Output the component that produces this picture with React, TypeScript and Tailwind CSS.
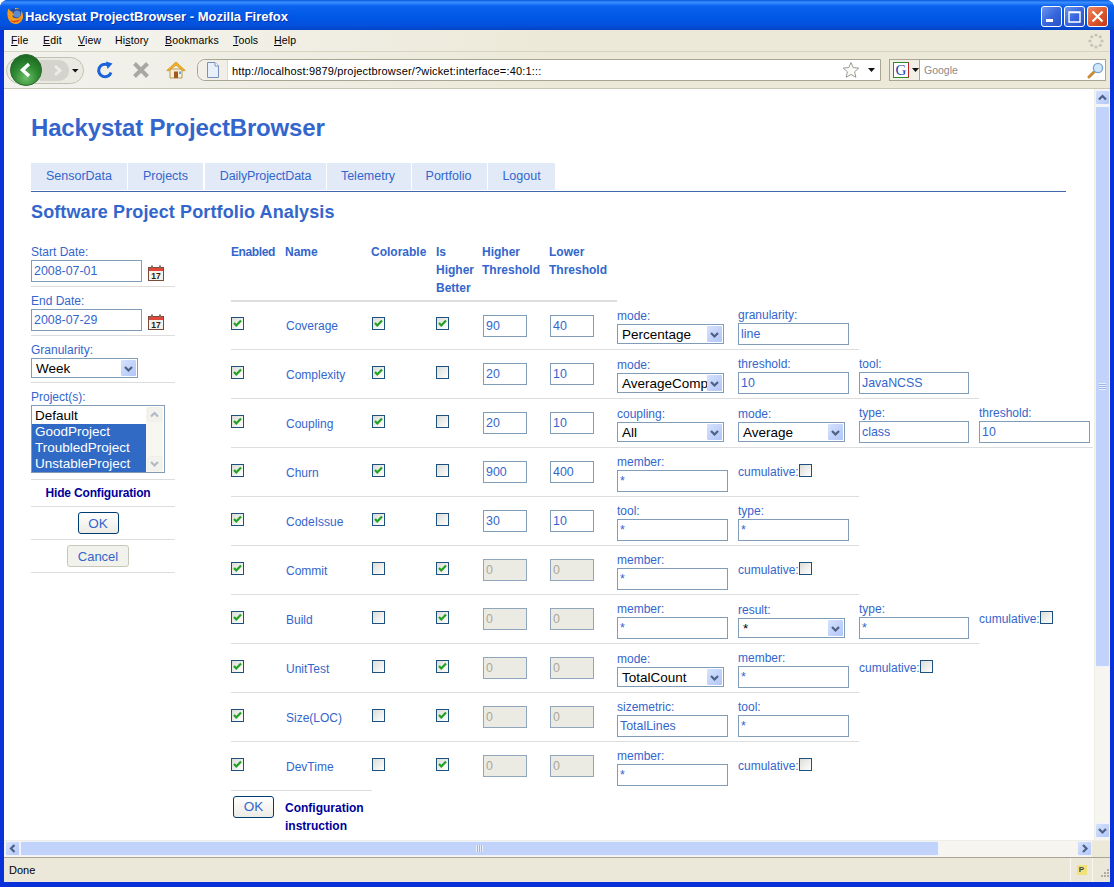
import React from "react";

const SANS = "font-['Liberation_Sans',Arial,sans-serif]";

function Chevron({ dir = "down" }: { dir?: "up" | "down" | "left" | "right" }) {
  const d = { down: "M2 4 L5.5 7.5 L9 4", up: "M2 7.5 L5.5 4 L9 7.5", left: "M7.5 2 L4 5.5 L7.5 9", right: "M4 2 L7.5 5.5 L4 9" }[dir];
  return (
    <svg width="11" height="11" viewBox="0 0 11 11" fill="none">
      <path d={d} stroke="#4d6185" strokeWidth="2.2" />
    </svg>
  );
}

function ScrollBtn({ dir }: { dir: "up" | "down" | "left" | "right" }) {
  return (
    <div className="flex h-[15px] w-[15px] shrink-0 items-center justify-center rounded-[2px] border border-[#eef3ff] bg-linear-to-br from-[#d6e2fd] to-[#b3c7f8]">
      <Chevron dir={dir} />
    </div>
  );
}

function Check({ on }: { on: boolean }) {
  return (
    <span className="flex h-[13px] w-[13px] shrink-0 items-center justify-center border border-[#1c5180] bg-linear-to-br from-[#dcdcd7] to-white">
      {on && (
        <svg width="11" height="11" viewBox="0 0 11 11" fill="none">
          <path d="M2 5 L4.3 7.5 L9 2.5" stroke="#21a121" strokeWidth="2.2" />
        </svg>
      )}
    </span>
  );
}

function Field({ value, w = "w-[111px]" }: { value: string; w?: string }) {
  return (
    <input
      readOnly
      value={value}
      className={`${w} block h-[22px] border border-[#7f9db9] bg-white pl-[2px] text-[12.4px] text-[#3366cc] outline-none`}
    />
  );
}

function Select({ value }: { value: string }) {
  return (
    <div className="flex h-[20px] w-[107px] items-center border border-[#7f9db9] bg-white pr-px">
      <span className="flex-1 overflow-hidden whitespace-nowrap pl-[4px] pt-px text-[13.5px] leading-[17px] text-black">{value}</span>
      <span className="flex h-[16px] w-[15px] shrink-0 items-center justify-center rounded-[1px] bg-linear-to-br from-[#d6e2fd] to-[#b1c5f7]">
        <Chevron />
      </span>
    </div>
  );
}

function Calendar() {
  return (
    <svg width="17" height="16" viewBox="0 0 17 16" className="ml-[6px] mt-[5px] shrink-0">
      <rect x="0.5" y="2.5" width="15" height="13" fill="#f6f1e8" stroke="#7a4a3a" />
      <rect x="1" y="3" width="14" height="3" fill="#e2463a" />
      <rect x="3" y="0.5" width="2" height="3" fill="#8a6a5a" />
      <rect x="11" y="0.5" width="2" height="3" fill="#8a6a5a" />
      <text x="8" y="14" textAnchor="middle" fontSize="8.5" fontWeight="700" fontFamily="Liberation Sans" fill="#222">17</text>
    </svg>
  );
}

type Cfg =
  | { k: "input"; label: string; value: string; w?: string; cell?: string; noLine?: boolean }
  | { k: "select"; label: string; value: string; cell?: string; noLine?: boolean }
  | { k: "check"; label: string; cell?: string; noLine?: boolean };

type Row = { name: string; col: boolean; hb: boolean; hi: string; lo: string; off?: boolean; cfg: Cfg[] };

const ROWS: Row[] = [
  { name: "Coverage", col: true, hb: true, hi: "90", lo: "40", cfg: [
    { k: "select", label: "mode:", value: "Percentage" },
    { k: "input", label: "granularity:", value: "line" },
  ] },
  { name: "Complexity", col: true, hb: false, hi: "20", lo: "10", cfg: [
    { k: "select", label: "mode:", value: "AverageComplexity" },
    { k: "input", label: "threshold:", value: "10" },
    { k: "input", label: "tool:", value: "JavaNCSS", w: "w-[110px]" },
  ] },
  { name: "Coupling", col: true, hb: false, hi: "20", lo: "10", cfg: [
    { k: "select", label: "coupling:", value: "All" },
    { k: "select", label: "mode:", value: "Average" },
    { k: "input", label: "type:", value: "class", w: "w-[110px]" },
    { k: "input", label: "threshold:", value: "10", cell: "w-[114px]" },
  ] },
  { name: "Churn", col: true, hb: false, hi: "900", lo: "400", cfg: [
    { k: "input", label: "member:", value: "*" },
    { k: "check", label: "cumulative:" },
  ] },
  { name: "CodeIssue", col: true, hb: false, hi: "30", lo: "10", cfg: [
    { k: "input", label: "tool:", value: "*" },
    { k: "input", label: "type:", value: "*" },
  ] },
  { name: "Commit", col: false, hb: true, hi: "0", lo: "0", off: true, cfg: [
    { k: "input", label: "member:", value: "*" },
    { k: "check", label: "cumulative:" },
  ] },
  { name: "Build", col: false, hb: true, hi: "0", lo: "0", off: true, cfg: [
    { k: "input", label: "member:", value: "*" },
    { k: "select", label: "result:", value: "*" },
    { k: "input", label: "type:", value: "*", w: "w-[110px]" },
    { k: "check", label: "cumulative:", noLine: true, cell: "w-[100px]" },
  ] },
  { name: "UnitTest", col: false, hb: true, hi: "0", lo: "0", off: true, cfg: [
    { k: "select", label: "mode:", value: "TotalCount" },
    { k: "input", label: "member:", value: "*" },
    { k: "check", label: "cumulative:", noLine: true, cell: "w-[100px]" },
  ] },
  { name: "Size(LOC)", col: false, hb: true, hi: "0", lo: "0", off: true, cfg: [
    { k: "input", label: "sizemetric:", value: "TotalLines" },
    { k: "input", label: "tool:", value: "*" },
  ] },
  { name: "DevTime", col: false, hb: true, hi: "0", lo: "0", off: true, cfg: [
    { k: "input", label: "member:", value: "*" },
    { k: "check", label: "cumulative:" },
  ] },
];

function Threshold({ value, off }: { value: string; off?: boolean }) {
  return (
    <input
      readOnly
      value={value}
      className={`block h-[22px] w-[44px] border pl-[2px] text-[12.4px] outline-none ${off ? "border-[#8fa6bd] bg-[#ebebe4] text-[#aca899]" : "border-[#7f9db9] bg-white text-[#3366cc]"}`}
    />
  );
}

function ConfigCell({ c, idx, first, last }: { c: Cfg; idx: number; first: boolean; last: boolean }) {
  const width = c.cell ?? (idx === 2 ? "w-[120px]" : "w-[121px]");
  const line = !last && !c.noLine ? "border-b border-[#dddddd]" : "";
  const shift = first ? "-mt-px" : "";
  return (
    <div className={`${width} shrink-0 ${line} text-[12px] text-[#3366cc]`}>
      {c.k === "check" ? (
        <div className={`flex items-start pt-[15px] ${shift}`}>
          <span className="leading-[18px]">{c.label}</span>
          <span className="mt-px"><Check on={false} /></span>
        </div>
      ) : c.k === "select" ? (
        <div className={`pt-[6px] ${shift}`}>
          <div className="pt-px leading-[16px]">{c.label}</div>
          <Select value={c.value} />
        </div>
      ) : (
        <div className={`pt-[5px] ${shift}`}>
          <div className="pt-px leading-[16px]">{c.label}</div>
          <Field value={c.value} w={c.w} />
        </div>
      )}
    </div>
  );
}

function TableRow({ r, first, last }: { r: Row; first: boolean; last: boolean }) {
  const line = last ? "" : "border-b border-[#dddddd]";
  const top = first ? "pt-[15px]" : "pt-[16px]";
  const nameTop = first ? "pt-[15px]" : "pt-[16px]";
  return (
    <div className={`flex ${first || last ? "h-[48px]" : "h-[49px]"}`}>
      <div className={`w-[54px] shrink-0 ${line} ${top}`}><Check on /></div>
      <div className={`w-[87px] shrink-0 ${line} ${nameTop} pl-px text-[12px] leading-[18px] text-[#3366cc]`}>{r.name}</div>
      <div className={`w-[64px] shrink-0 ${line} ${top}`}><Check on={r.col} /></div>
      <div className={`w-[47px] shrink-0 ${line} ${top}`}><Check on={r.hb} /></div>
      <div className={`w-[67px] shrink-0 ${line} pt-[13px]`}><Threshold value={r.hi} off={r.off} /></div>
      <div className={`w-[67px] shrink-0 ${line} pt-[13px]`}><Threshold value={r.lo} off={r.off} /></div>
      {r.cfg.map((c, i) => (
        <ConfigCell key={i} c={c} idx={i} first={first} last={last} />
      ))}
    </div>
  );
}

function Sidebar() {
  const group = "border-b border-[#dddddd]";
  const label = "pt-px text-[12px] leading-[16px] text-[#3366cc]";
  return (
    <div className="w-[144px] shrink-0">
      <div className={`${group} pb-[4px]`}>
        <div className={label}>Start Date:</div>
        <div className="flex"><Field value="2008-07-01" /><Calendar /></div>
      </div>
      <div className={`${group} pb-[4px] pt-[5px]`}>
        <div className={label}>End Date:</div>
        <div className="flex"><Field value="2008-07-29" /><Calendar /></div>
      </div>
      <div className={`${group} pb-[4px] pt-[5px]`}>
        <div className={label}>Granularity:</div>
        <Select value="Week" />
      </div>
      <div className={`${group} pb-[6px] pt-[5px]`}>
        <div className={label}>Project(s):</div>
        <div className="flex h-[68px] w-[134px] border border-[#7f9db9] bg-white pr-px pt-px">
          <div className="flex-1 pt-px text-[13.5px] leading-[16px]">
            <div className="pl-[3px] text-black">Default</div>
            <div className="bg-[#316ac5] pl-[3px] text-white">GoodProject</div>
            <div className="bg-[#316ac5] pl-[3px] text-white">TroubledProject</div>
            <div className="bg-[#316ac5] pl-[3px] text-white">UnstableProject</div>
          </div>
          <div className="flex w-[17px] flex-col justify-between bg-[#f7f6f1] px-px pb-px">
            <div className="flex h-[15px] items-center justify-center rounded-[2px] border border-[#e4e3da] bg-[#efeee6] opacity-40"><Chevron dir="up" /></div>
            <div className="flex h-[15px] items-center justify-center rounded-[2px] border border-[#e4e3da] bg-[#efeee6] opacity-40"><Chevron dir="down" /></div>
          </div>
        </div>
      </div>
      <div className={`${group} h-[27px] pr-[10px] pt-px text-center text-[12px] font-bold leading-[25px] tracking-[-0.17px] text-[#000099]`}>Hide Configuration</div>
      <div className={`${group} flex justify-center pb-[5px] pr-[10px] pt-[5px]`}>
        <button className="h-[22px] w-[41px] rounded-[3px] border border-[#003c74] bg-linear-to-b from-white to-[#ecebe5] pt-px text-[13.5px] text-[#3366cc]">OK</button>
      </div>
      <div className={`${group} flex justify-center pb-[5px] pr-[10px] pt-[5px]`}>
        <button className="h-[22px] w-[62px] rounded-[3px] border border-[#c9c7ba] bg-[#f2f2ec] pt-px text-[13px] text-[#3366cc]">Cancel</button>
      </div>
    </div>
  );
}

function PortfolioTable() {
  return (
    <div className="ml-[56px] shrink-0">
      <div className="flex h-[57px] text-[12px] font-bold leading-[18px] text-[#3366cc]">
        <div className="w-[54px] tracking-[-0.4px]">Enabled</div>
        <div className="w-[86px]">Name</div>
        <div className="w-[65px]">Colorable</div>
        <div className="w-[46px]">Is<br />Higher<br />Better</div>
        <div className="w-[67px]">Higher<br />Threshold</div>
        <div className="w-[68px]">Lower<br />Threshold</div>
      </div>
      <div className="h-[2px] w-[386px] bg-[#dddddd]" />
      {ROWS.map((r, i) => (
        <TableRow key={r.name} r={r} first={i === 0} last={i === ROWS.length - 1} />
      ))}
      <div className="flex w-[141px] border-t border-[#dddddd] pt-[5px]">
        <button className="ml-[2px] h-[22px] w-[41px] shrink-0 rounded-[3px] border border-[#003c74] bg-linear-to-b from-white to-[#ecebe5] text-[13.5px] text-[#3366cc]">OK</button>
        <div className="ml-[11px] mt-[3px] whitespace-nowrap text-[12px] font-bold leading-[18px] text-[#000099]">Configuration<br />instruction</div>
      </div>
    </div>
  );
}

function Tabs() {
  const tab = "flex h-[27px] items-center justify-center bg-[#e2eaf8] text-[12.5px] text-[#3366cc]";
  return (
    <div className="mt-[21px] w-[1035px] border-b border-[#4067ab] pb-px">
      <div className="flex gap-px">
        <div className={`${tab} w-[96px]`}>SensorData</div>
        <div className={`${tab} mr-px w-[75px]`}>Projects</div>
        <div className={`${tab} w-[121px] tracking-[-0.1px]`}>DailyProjectData</div>
        <div className={`${tab} w-[84px] pr-[2px]`}>Telemetry</div>
        <div className={`${tab} w-[75px] pr-[2px]`}>Portfolio</div>
        <div className={`${tab} w-[67px]`}>Logout</div>
      </div>
    </div>
  );
}

function FirefoxLogo() {
  return (
    <svg width="18" height="18" viewBox="0 0 18 18" className="mt-px shrink-0">
      <circle cx="9.5" cy="9" r="7.8" fill="#24489a" />
      <circle cx="11" cy="7" r="3.6" fill="#5d8bd2" />
      <path d="M2.6 1.5 C0.6 5.5 0.8 12 5 15.6 C9 18.4 15.2 16.8 16.8 11.2 C17.4 8.6 16.8 5.6 15 3.6 C15.6 7 15 9.8 12.2 11 C9.4 12 6.8 10.8 6.2 8.6 C7.2 9 8.2 8.6 8.7 7.6 C7.2 7.2 6.2 6.2 6.6 4.6 C5 4.8 3.6 3.4 2.6 1.5Z" fill="#f39a1f" />
      <path d="M9 1 C11 0.8 13 1.6 14.6 3 C12.6 2 10.8 1.8 9 2.6Z" fill="#f6b02c" />
      <path d="M4 13.6 C7.6 16.6 13 15.6 15.4 11.2 C13 13.6 8.4 14.6 4 13.6Z" fill="#d9401a" />
    </svg>
  );
}

function WinBtn({ kind }: { kind: "min" | "max" | "close" }) {
  const bg = kind === "close" ? "from-[#ec8a66] via-[#dd5a30] to-[#c13a14]" : "from-[#6c94ee] via-[#3868de] to-[#2a4fc8]";
  return (
    <div className={`flex h-[21px] w-[21px] items-center justify-center rounded-[3px] border border-white bg-linear-to-br ${bg}`}>
      <svg width="15" height="15" viewBox="0 0 15 15" fill="none">
        {kind === "min" && <rect x="2" y="10" width="7" height="3" fill="white" />}
        {kind === "max" && <path d="M2 3 H13 V13 H2 Z M2 3.5 H13" stroke="white" strokeWidth="1.4" />}
        {kind === "close" && <path d="M2.5 2.5 L12.5 12.5 M12.5 2.5 L2.5 12.5" stroke="white" strokeWidth="2.2" />}
      </svg>
    </div>
  );
}

function TitleBar() {
  return (
    <div className="flex h-[30px] shrink-0 items-center bg-[linear-gradient(180deg,#0a5ae0_0%,#3a8eff_8%,#0a62ee_20%,#0058e6_55%,#0450dc_85%,#0344c4_100%)] pl-[6px] pr-[6px]">
      <FirefoxLogo />
      <span className={`ml-px flex-1 pt-[3px] text-[13px] font-bold text-white ${SANS} [text-shadow:1px_1px_#0b2fa0]`}>Hackystat ProjectBrowser - Mozilla Firefox</span>
      <div className="flex gap-[2px] pt-[3px]">
        <WinBtn kind="min" />
        <WinBtn kind="max" />
        <WinBtn kind="close" />
      </div>
    </div>
  );
}

function Spinner() {
  const dots = Array.from({ length: 8 }, (_, i) => (i * Math.PI) / 4);
  return (
    <svg width="16" height="16" viewBox="0 0 16 16" className="mr-[6px]">
      {dots.map((a, i) => (
        <circle key={i} cx={8 + 6 * Math.cos(a)} cy={8 + 6 * Math.sin(a)} r="1.6" fill="#c5c3b8" />
      ))}
    </svg>
  );
}

function Mnemonic({ pre = "", u, post }: { pre?: string; u: string; post: string }) {
  return <span>{pre}<span className="underline">{u}</span>{post}</span>;
}

function MenuBar() {
  return (
    <div className="flex h-[22px] shrink-0 items-center border-b border-[#d8d4c2] bg-linear-to-r from-[#f5f5f2] via-[#ece9d8] to-[#ece9d8] pl-[7px] text-[10.5px] tracking-[0.15px] text-black">
      <div className="w-[32px]"><Mnemonic u="F" post="ile" /></div>
      <div className="w-[35px]"><Mnemonic u="E" post="dit" /></div>
      <div className="w-[37px]"><Mnemonic u="V" post="iew" /></div>
      <div className="w-[50px]"><Mnemonic pre="Hi" u="s" post="tory" /></div>
      <div className="w-[68px]"><Mnemonic u="B" post="ookmarks" /></div>
      <div className="w-[41px]"><Mnemonic u="T" post="ools" /></div>
      <div className="flex-1"><Mnemonic u="H" post="elp" /></div>
      <Spinner />
    </div>
  );
}

function NavButtons() {
  return (
    <svg width="80" height="34" viewBox="0 0 80 34" className="ml-[2px] shrink-0">
      <defs>
        <radialGradient id="bk" cx="50%" cy="75%" r="70%">
          <stop offset="0%" stopColor="#6cc06a" />
          <stop offset="55%" stopColor="#2f8a32" />
          <stop offset="100%" stopColor="#1d6a22" />
        </radialGradient>
      </defs>
      <rect x="0.5" y="4.5" width="77" height="26" rx="13" fill="#eaeae2" stroke="#c2c0b2" />
      <rect x="26" y="7" width="37" height="21" rx="10" fill="#d4d4cd" />
      <circle cx="20" cy="17" r="15.5" fill="url(#bk)" stroke="#2a6a2e" />
      <path d="M23 11 L16.5 17 L23 23" fill="none" stroke="white" strokeWidth="3.4" />
      <path d="M49 13 L54 17.5 L49 22" fill="none" stroke="#ecece6" strokeWidth="3" />
      <path d="M66 16 H72.5 L69.2 19.5 Z" fill="#111" />
    </svg>
  );
}

function Reload() {
  return (
    <svg width="18" height="18" viewBox="0 0 18 18" fill="none" className="shrink-0">
      <path d="M15 11.5 A6.3 6.3 0 1 1 11.5 3.7" stroke="#1a63d8" strokeWidth="3" />
      <path d="M10 0.5 L16.5 2.5 L11.5 8 Z" fill="#1a63d8" />
    </svg>
  );
}

function Stop() {
  return (
    <svg width="18" height="18" viewBox="0 0 18 18" fill="none" className="shrink-0">
      <path d="M2.5 2.5 L15.5 15.5 M15.5 2.5 L2.5 15.5" stroke="#a9a9a4" strokeWidth="4" />
    </svg>
  );
}

function Home() {
  return (
    <svg width="20" height="18" viewBox="0 0 20 18" className="shrink-0">
      <path d="M4 8 H16 V17 H4 Z" fill="#f7efd5" stroke="#b89a5a" />
      <path d="M0.8 9.5 L10 1 L19.2 9.5 L17 9.8 L10 4 L3 9.8 Z" fill="#f5b52a" stroke="#d48a12" strokeWidth="0.8" />
      <rect x="8" y="10.5" width="4" height="6.5" fill="#a05a20" />
      <rect x="13" y="10.5" width="2" height="2.5" fill="#6ea0e0" />
    </svg>
  );
}

function Star() {
  return (
    <svg width="18" height="18" viewBox="0 0 18 18" className="shrink-0">
      <path d="M9 1.5 L11.2 6.6 L16.8 7.1 L12.6 10.8 L13.9 16.3 L9 13.4 L4.1 16.3 L5.4 10.8 L1.2 7.1 L6.8 6.6 Z" fill="#fbfbf8" stroke="#9a9a96" strokeWidth="1" />
    </svg>
  );
}

function Triangle() {
  return (
    <svg width="7" height="4" viewBox="0 0 7 4" className="shrink-0">
      <path d="M0 0 H7 L3.5 4 Z" fill="#111" />
    </svg>
  );
}

function PageIcon() {
  return (
    <svg width="14" height="16" viewBox="0 0 14 16" className="shrink-0">
      <path d="M1.5 0.5 H9 L12.5 4 V15.5 H1.5 Z" fill="#e8f0fc" stroke="#7a90bc" />
      <path d="M9 0.5 V4 H12.5" fill="#fff" stroke="#7a90bc" />
    </svg>
  );
}

function Magnifier() {
  return (
    <svg width="17" height="17" viewBox="0 0 17 17" className="shrink-0">
      <path d="M7 10 L2 15" stroke="#c98a3a" strokeWidth="3" strokeLinecap="round" />
      <circle cx="11" cy="6" r="4.6" fill="#cfe6fb" stroke="#7ba6d0" strokeWidth="1.4" />
    </svg>
  );
}

function Toolbar() {
  return (
    <div className="flex h-[37px] shrink-0 items-center border-b border-[#c9c6b5] bg-linear-to-r from-[#f2f2ee] via-[#ece9d8] to-[#ece9d8] pr-[4px]">
      <NavButtons />
      <div className="ml-[10px]"><Reload /></div>
      <div className="ml-[18px]"><Stop /></div>
      <div className="ml-[16px]"><Home /></div>
      <div className="ml-[11px] flex h-[22px] w-[684px] shrink-0 items-center rounded-l-[8px] border border-[#a8a595] bg-white">
        <div className="flex h-full w-[30px] shrink-0 items-center justify-center rounded-l-[8px] border-r border-[#dcdad0] bg-[#f1efe6] pl-px">
          <PageIcon />
        </div>
        <span className="ml-[4px] flex-1 pt-[2px] text-[11px] tracking-[0.17px] text-black">http://localhost:9879/projectbrowser/?wicket:interface=:40:1:::</span>
        <Star />
        <div className="ml-[8px] mr-[5px]"><Triangle /></div>
      </div>
      <div className="ml-[8px] flex h-[22px] w-[217px] shrink-0 items-center border border-[#a8a595] bg-white">
        <div className="flex h-full w-[30px] shrink-0 items-center gap-[3px] border-r border-[#a8a595] bg-[#f1efe6] pl-[3px]">
          <div className="flex h-[16px] w-[16px] items-center justify-center border border-[#2a8a2a] border-b-[#2a8a2a] border-r-[#c02020] bg-white font-['Liberation_Serif',serif] text-[15px] leading-[14px] text-[#1a3fb0]">G</div>
          <Triangle />
        </div>
        <span className="ml-[4px] flex-1 pt-[2px] text-[10.5px] text-[#8a8a8a]">Google</span>
        <div className="mr-[1px]"><Magnifier /></div>
      </div>
    </div>
  );
}

function VScroll() {
  return (
    <div className="flex w-[16px] shrink-0 flex-col border-l border-[#eeeee6] bg-[#f6f5ef] pb-[2px] pt-px">
      <ScrollBtn dir="up" />
      <div className="mt-px flex h-[561px] w-[15px] items-center justify-center rounded-[2px] border border-[#eef3ff] bg-[#c1d3fb]">
        <div className="h-[7px] w-[7px] bg-[repeating-linear-gradient(180deg,#e8efff_0_1px,#9db5ea_1px_2px)]" />
      </div>
      <div className="flex-1" />
      <ScrollBtn dir="down" />
    </div>
  );
}

function HScroll() {
  return (
    <div className="flex h-[17px] shrink-0 border-t border-[#eeeee6] bg-[#f6f5ef] pl-px">
      <ScrollBtn dir="left" />
      <div className="flex h-[15px] w-[919px] items-center justify-center rounded-[2px] border border-[#eef3ff] bg-[#c1d3fb]">
        <div className="h-[7px] w-[7px] bg-[repeating-linear-gradient(90deg,#e8efff_0_1px,#9db5ea_1px_2px)]" />
      </div>
      <div className="flex-1" />
      <ScrollBtn dir="right" />
      <div className="w-[18px] shrink-0 bg-[#ece9d8]" />
    </div>
  );
}

function StatusBar() {
  return (
    <div className="flex h-[25px] shrink-0 items-center border-t border-[#a8a595] bg-[#ebe8d9] pl-[5px] text-[11px] text-black">
      <span className="flex-1">Done</span>
      <div className="flex h-full w-[23px] items-center justify-center border-l border-r border-[#f8f7f0]">
        <span className="flex h-[10px] w-[10px] items-center justify-center bg-[#f2e27a] text-[8px] font-bold leading-none text-[#444]">P</span>
      </div>
      <div className="w-[17px]">
        <svg width="12" height="12" viewBox="0 0 12 12" className="ml-[5px] mt-[8px]">
          <path d="M9 1 h2 v2 h-2 Z M6 4 h2 v2 h-2 Z M9 4 h2 v2 h-2 Z M3 7 h2 v2 h-2 Z M6 7 h2 v2 h-2 Z M9 7 h2 v2 h-2 Z" fill="#b0ad9e" />
        </svg>
      </div>
    </div>
  );
}

export default function App() {
  return (
    <div className="bg-white">
      <div className={`flex h-[887px] w-[1114px] flex-col overflow-hidden rounded-t-[8px] bg-[#0831d9] ${SANS}`}>
        <TitleBar />
        <div className="mx-[4px] mb-[5px] flex min-h-0 flex-1 flex-col">
          <MenuBar />
          <Toolbar />
          <div className="flex min-h-0 flex-1">
            <div className="min-w-0 flex-1 overflow-hidden bg-white pl-[27px]">
              <h1 className="mt-[25px] text-[24px] font-bold leading-[28px] tracking-[-0.16px] text-[#3366cc]">Hackystat ProjectBrowser</h1>
              <Tabs />
              <h2 className="mt-[10px] text-[18px] font-bold leading-[21px] tracking-[0.12px] text-[#3366cc]">Software Project Portfolio Analysis</h2>
              <div className="mt-[20px] flex">
                <Sidebar />
                <PortfolioTable />
              </div>
            </div>
            <VScroll />
          </div>
          <HScroll />
          <StatusBar />
        </div>
      </div>
    </div>
  );
}
